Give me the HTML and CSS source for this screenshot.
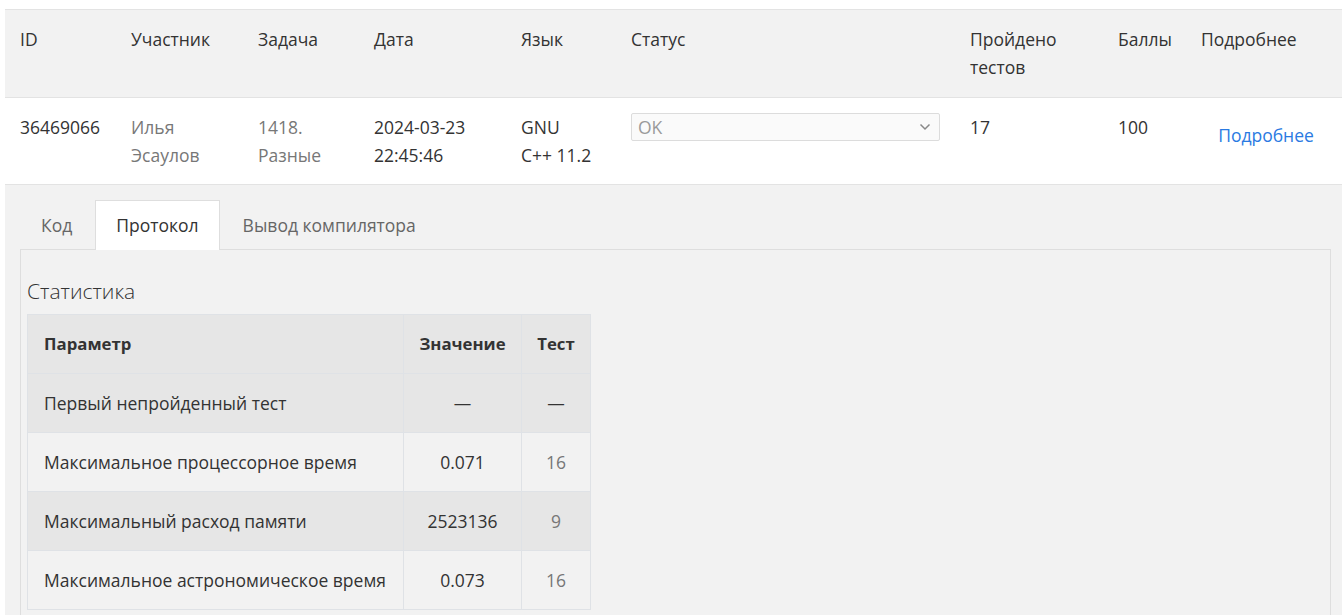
FILE: index.html
```html
<!DOCTYPE html>
<html lang="ru">
<head>
<meta charset="utf-8">
<title>Посылка</title>
<link rel="stylesheet" href="styles.css">
</head>
<body>
<div class="page">
  <table class="runs">
    <colgroup>
      <col class="c-id"><col class="c-user"><col class="c-task"><col class="c-date"><col class="c-lang"><col class="c-status"><col class="c-tests"><col class="c-score"><col class="c-more">
    </colgroup>
    <thead>
      <tr>
        <th>ID</th>
        <th>Участник</th>
        <th>Задача</th>
        <th>Дата</th>
        <th>Язык</th>
        <th>Статус</th>
        <th>Пройдено тестов</th>
        <th>Баллы</th>
        <th>Подробнее</th>
      </tr>
    </thead>
    <tbody>
      <tr class="run">
        <td>36469066</td>
        <td><a class="muted" href="#">Илья Эсаулов</a></td>
        <td><a class="muted" href="#">1418. Разные</a></td>
        <td>2024-03-23 22:45:46</td>
        <td>GNU C++&nbsp;11.2</td>
        <td>
          <div class="select">
            <span>OK</span>
            <svg class="chev" width="12" height="8" viewBox="0 0 12 8"><path d="M1.5 1.5 L6 6 L10.5 1.5" fill="none" stroke="#888" stroke-width="1.5"/></svg>
          </div>
        </td>
        <td>17</td>
        <td>100</td>
        <td class="more-cell"><a class="more" href="#">Подробнее</a></td>
      </tr>
      <tr class="details">
        <td colspan="9">
          <ul class="tabs">
            <li class="tab">Код</li>
            <li class="tab active">Протокол</li>
            <li class="tab">Вывод компилятора</li>
          </ul>
          <div class="panel">
            <h4 class="stat-title">Статистика</h4>
            <table class="stats">
              <colgroup>
                <col class="s-param"><col class="s-val"><col class="s-test">
              </colgroup>
              <thead>
                <tr>
                  <th>Параметр</th>
                  <th class="center">Значение</th>
                  <th class="center">Тест</th>
                </tr>
              </thead>
              <tbody>
                <tr class="odd">
                  <td>Первый непройденный тест</td>
                  <td class="center">—</td>
                  <td class="center">—</td>
                </tr>
                <tr>
                  <td>Максимальное процессорное время</td>
                  <td class="center">0.071</td>
                  <td class="center"><a class="muted" href="#">16</a></td>
                </tr>
                <tr class="odd">
                  <td>Максимальный расход памяти</td>
                  <td class="center">2523136</td>
                  <td class="center"><a class="muted" href="#">9</a></td>
                </tr>
                <tr>
                  <td>Максимальное астрономическое время</td>
                  <td class="center">0.073</td>
                  <td class="center"><a class="muted" href="#">16</a></td>
                </tr>
              </tbody>
            </table>
          </div>
        </td>
      </tr>
    </tbody>
  </table>
</div>
</body>
</html>
```
FILE: styles.css
```css
html, body {
  margin: 0;
  padding: 0;
  background: #fff;
}
body {
  font-family: "Open Sans", "Noto Sans", sans-serif;
  font-size: 17.5px;
  line-height: 28px;
  color: #333;
  overflow: hidden;
}
.page {
  padding: 9px 0 0 5px;
}
a { text-decoration: none; }
a.muted { color: #777; }

.runs {
  width: 1341px;
  border-collapse: collapse;
  table-layout: fixed;
}
.c-id { width: 111px; }
.c-user { width: 127px; }
.c-task { width: 116px; }
.c-date { width: 147px; }
.c-lang { width: 110px; }
.c-status { width: 339px; }
.c-tests { width: 148px; }
.c-score { width: 83px; }
.c-more { width: 160px; }

.runs > thead > tr > th {
  background: #f2f2f2;
  font-weight: normal;
  text-align: left;
  vertical-align: top;
  padding: 15px 15px 16px;
  border-top: 1px solid #e3e3e3;
  border-bottom: 1px solid #e3e3e3;
}
.runs > tbody > tr.run > td {
  padding: 15px;
  vertical-align: top;
  border-bottom: 1px solid #e3e3e3;
  background: #fff;
}
.select {
  display: flex;
  align-items: center;
  justify-content: space-between;
  height: 26px;
  border: 1px solid #dcdcdc;
  border-radius: 2px;
  background: #fafafa;
  color: #9a9a9a;
  padding: 0 8px 0 6px;
  line-height: 26px;
}
.chev { display: block; }
.more-cell { text-align: center; }
.more {
  display: inline-block;
  padding-top: 8px;
  color: #2a7ae2;
}

.details > td {
  background: #f2f2f2;
  padding: 15px;
}
.tabs {
  list-style: none;
  margin: 0;
  padding: 0;
  display: flex;
  gap: 2px;
}
.tab {
  padding: 10px 20px;
  border: 1px solid transparent;
  border-bottom: none;
  color: #666;
  margin-bottom: -1px;
  position: relative;
}
.tab.active {
  background: #fff;
  border-color: #dedede;
  color: #333;
  padding-bottom: 11px;
}
.panel {
  border: 1px solid #dedede;
  padding: 0 6px 6px;
  min-height: 400px;
}
.stat-title {
  font-size: 21px;
  font-weight: 300;
  line-height: 30px;
  margin: 26px 0 8px;
  color: #333;
}
.stats {
  border-collapse: collapse;
  border: 1px solid #dfe2e6;
  table-layout: fixed;
  width: 563px;
}
.s-param { width: 376px; }
.s-val { width: 118px; }
.s-test { width: 69px; }
.stats th, .stats td {
  padding: 15px 16px;
  border: 1px solid #dfe2e6;
  background: #f2f2f2;
  text-align: left;
  white-space: nowrap;
}
.stats th {
  background: #e6e6e6;
  font-weight: bold;
  font-size: 16.8px;
}
.stats tr.odd td { background: #e6e6e6; }
.stats .center { text-align: center; padding-left: 0; padding-right: 0; }
```
